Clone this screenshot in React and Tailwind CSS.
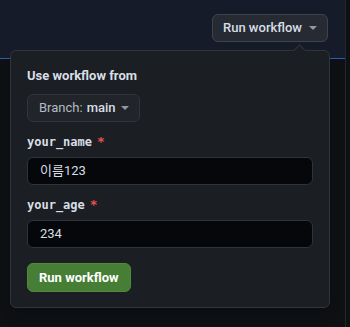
import React from 'react';

const sans = { fontFamily: 'Roboto, "Noto Sans CJK KR", "Noto Sans", sans-serif' };

function Caret({ className = '' }) {
  return (
    <svg className={className} width="8" height="4" viewBox="0 0 8 4" fill="currentColor">
      <path d="M0 0h8L4 4z" />
    </svg>
  );
}

function Field({ name, value }) {
  return (
    <div className="flex flex-col">
      <label className="flex items-center gap-[5px] h-5 text-[12px] font-bold text-[#d8dee6] font-['DejaVu_Sans_Mono',monospace]">
        {name}
        <span className="text-[#e5534b] text-[13px]">*</span>
      </label>
      <div className="mt-[5px] h-[28px] rounded-md border border-[#2f343b] bg-[#05070a] px-3 flex items-center text-[13px] text-[#d8dee6]">
        {value}
      </div>
    </div>
  );
}

export default function App() {
  return (
    <div className="relative w-[350px] h-[327px] flex bg-[#0e1014] overflow-hidden" style={sans}>
      <div className="flex-1 flex flex-col">
        <div className="h-[59px] bg-[#161b2a] border-b border-[#2d5bb5] flex justify-end items-start pt-[14px] pr-[17px]">
          <button className="h-[28px] pl-[10px] pr-[10px] flex items-center gap-[7px] rounded-md border border-[#3d444d] bg-[#262b33] text-[13px] font-medium text-[#d8dee6]">
            Run workflow
            <Caret className="text-[#9198a1]" />
          </button>
        </div>
        <div className="flex-1" />
      </div>
      <div className="w-[5px] border-l border-[#23272d] bg-[#0e1014]" />

      {/* dropdown panel */}
      <div className="absolute left-[10px] top-[50px] w-[320px] rounded-md border border-[#30353c] bg-[#1b1e23] px-4 pt-[15px] pb-[15px] shadow-lg">
        <div className="absolute -top-[5px] left-[284px] w-[9px] h-[9px] rotate-45 bg-[#1b1e23] border-l border-t border-[#30353c]" />
        <div className="h-5 flex items-center text-[13px] font-bold text-[#d8dee6]">Use workflow from</div>
        <button className="mt-[8px] h-[28px] pl-[11px] pr-[10px] flex items-center gap-[4px] rounded-md border border-[#30353c] bg-[#212529] text-[13px] text-[#d8dee6]">
          <span className="text-[#b3bac3]">Branch:</span>
          <span className="font-medium">main</span>
          <Caret className="ml-[1px] text-[#9198a1]" />
        </button>
        <div className="mt-[10px] w-[286px] flex flex-col gap-[10px]">
          <Field name="your_name" value="이름123" />
          <Field name="your_age" value="234" />
        </div>
        <button className="mt-[15px] h-[29px] px-[11px] flex items-center rounded-md bg-[#477e36] border border-[#508a3e] text-[13px] font-bold text-white">
          Run workflow
        </button>
      </div>
    </div>
  );
}
